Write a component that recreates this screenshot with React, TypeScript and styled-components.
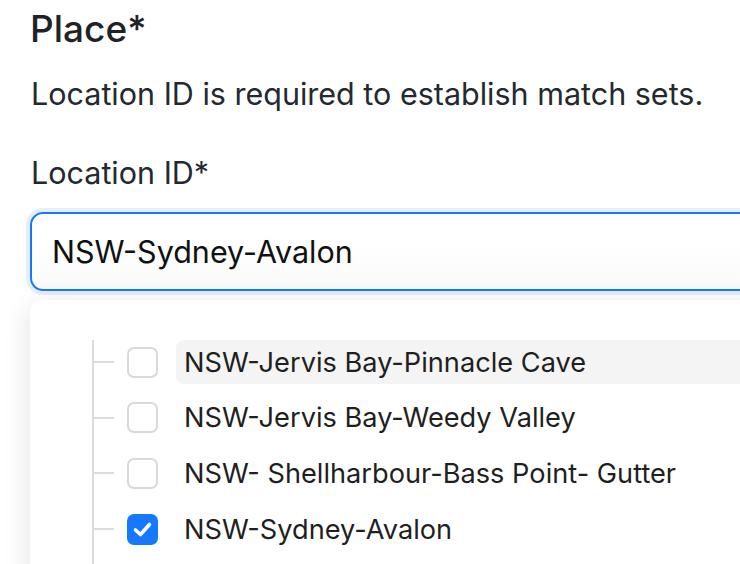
import React from 'react';
import styled, { createGlobalStyle } from 'styled-components';

const GlobalStyle = createGlobalStyle`
  html, body {
    margin: 0;
    padding: 0;
    background: #fff;
  }
  body {
    font-family: Inter, 'Noto Sans', sans-serif;
    color: #1f2328;
  }
`;

const locations = [
  { name: 'NSW-Jervis Bay-Pinnacle Cave', checked: false, hovered: true },
  { name: 'NSW-Jervis Bay-Weedy Valley', checked: false, hovered: false },
  { name: 'NSW- Shellharbour-Bass Point- Gutter', checked: false, hovered: false },
  { name: 'NSW-Sydney-Avalon', checked: true, hovered: false },
];

const App = () => {
  return (
    <>
      <GlobalStyle />
      <Page>
        <Title>Place*</Title>
        <Hint>Location ID is required to establish match sets.</Hint>
        <Label>Location ID*</Label>
        <Input defaultValue="NSW-Sydney-Avalon" />
        <Dropdown>
          <Tree>
            {locations.map((loc) => (
              <Row key={loc.name}>
                <Tick />
                <Checkbox $checked={loc.checked}>
                  {loc.checked && (
                    <svg width="31" height="31" viewBox="0 0 31 31">
                      <path
                        d="M8.5 16 L13.5 20.5 L22.5 10.5"
                        fill="none"
                        stroke="#fff"
                        strokeWidth="3.6"
                        strokeLinecap="round"
                        strokeLinejoin="round"
                      />
                    </svg>
                  )}
                </Checkbox>
                <ItemText $hovered={loc.hovered}>{loc.name}</ItemText>
              </Row>
            ))}
          </Tree>
        </Dropdown>
      </Page>
    </>
  );
};

export default App;

const Page = styled.div`
  width: 740px;
  height: 564px;
  padding: 6px 0 0 30px;
  box-sizing: border-box;
  overflow: hidden;
`;

const Title = styled.h2`
  margin: 0;
  font-size: 37px;
  line-height: 46px;
  font-weight: 500;
  color: #1f2328;
`;

const Hint = styled.p`
  margin: 24px 0 0 1px;
  font-size: 30.5px;
  line-height: 36px;
  font-weight: 400;
  color: #24292f;
`;

const Label = styled.label`
  display: block;
  margin: 43px 0 0 1px;
  font-size: 30.5px;
  line-height: 36px;
  color: #24292f;
`;

const Input = styled.input`
  display: block;
  margin-top: 21px;
  width: 780px;
  height: 79px;
  box-sizing: border-box;
  padding: 0 20px;
  border: 2px solid #1677ff;
  border-radius: 13px;
  box-shadow: 0 0 0 4px rgba(22, 119, 255, 0.12);
  background: linear-gradient(#fff 40%, #fafafa);
  font-family: Inter, 'Noto Sans', sans-serif;
  font-size: 30.5px;
  color: #111;
  outline: none;
`;

const Dropdown = styled.div`
  margin-top: 9px;
  width: 780px;
  height: 300px;
  padding: 40px 0 0 62px;
  box-sizing: border-box;
  background: #fff;
  border-radius: 13px 0 0 0;
  box-shadow: 0 6px 28px rgba(0, 0, 0, 0.12);
`;

const Tree = styled.ul`
  display: flex;
  flex-direction: column;
  gap: 11.7px;
  margin: 0;
  padding: 0 0 40px;
  list-style: none;
  border-left: 2px solid #dcdcdc;
`;

const Row = styled.li`
  display: flex;
  align-items: center;
  height: 44px;
`;

const Tick = styled.span`
  width: 20px;
  height: 2px;
  background: #dcdcdc;
`;

const Checkbox = styled.span<{ $checked: boolean }>`
  display: flex;
  align-items: center;
  justify-content: center;
  flex-shrink: 0;
  margin-left: 13px;
  width: 31px;
  height: 31px;
  box-sizing: border-box;
  border-radius: 7px;
  border: ${(p) => (p.$checked ? 'none' : '2px solid #d9d9d9')};
  background: ${(p) => (p.$checked ? '#1677ff' : '#fff')};
`;

const ItemText = styled.span<{ $hovered: boolean }>`
  display: flex;
  align-items: center;
  flex: 1;
  height: 44px;
  margin-left: 18px;
  padding-left: 8px;
  border-radius: 8px 0 0 8px;
  background: ${(p) => (p.$hovered ? '#f4f4f4' : 'transparent')};
  font-size: 27.2px;
  color: #1f1f1f;
`;
